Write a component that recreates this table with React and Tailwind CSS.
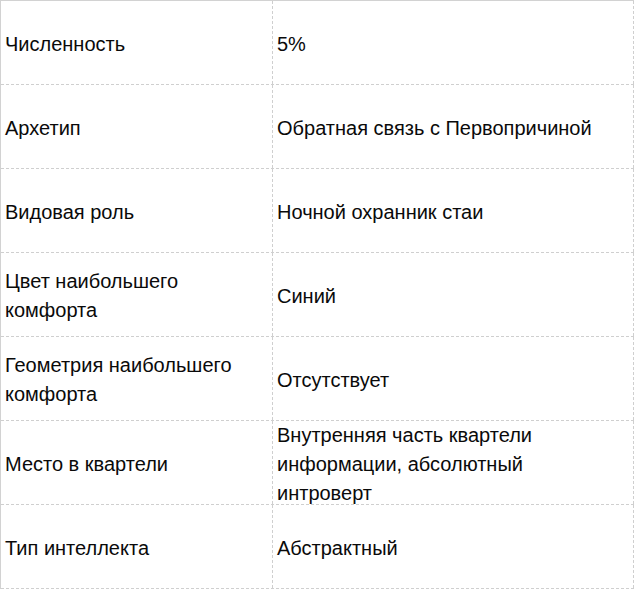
import React from "react";

const rows = [
    ["Численность", "5%"],
    ["Архетип", "Обратная связь с Первопричиной"],
    ["Видовая роль", "Ночной охранник стаи"],
    ["Цвет наибольшего комфорта", "Синий"],
    ["Геометрия наибольшего комфорта", "Отсутствует"],
    ["Место в квартели", "Внутренняя часть квартели информации, абсолютный интроверт"],
    ["Тип интеллекта", "Абстрактный"],
];

export default function App() {
    return (
        <div
            className="w-[634px] h-[589px] bg-white border-t border-l border-[#d2d2d2] text-[#0a0a0a] text-[20px] leading-[29px]"
            style={{ fontFamily: '"Liberation Sans", Arial, sans-serif' }}
        >
            {rows.map(([label, value], i) => (
                <div key={i} className="flex h-[84px] border-b border-dashed border-[#cfcfcf]">
                    <div className="w-[272px] flex items-center pl-[4px] pr-2 pt-[3px] border-r border-dashed border-[#cfcfcf]">
                        <span className="max-w-[245px]">{label}</span>
                    </div>
                    <div className="flex-1 flex items-center pl-[4px] pr-2 pt-[3px] border-r border-dashed border-[#cfcfcf]">
                        <span className="max-w-[330px]">{value}</span>
                    </div>
                </div>
            ))}
        </div>
    );
}
